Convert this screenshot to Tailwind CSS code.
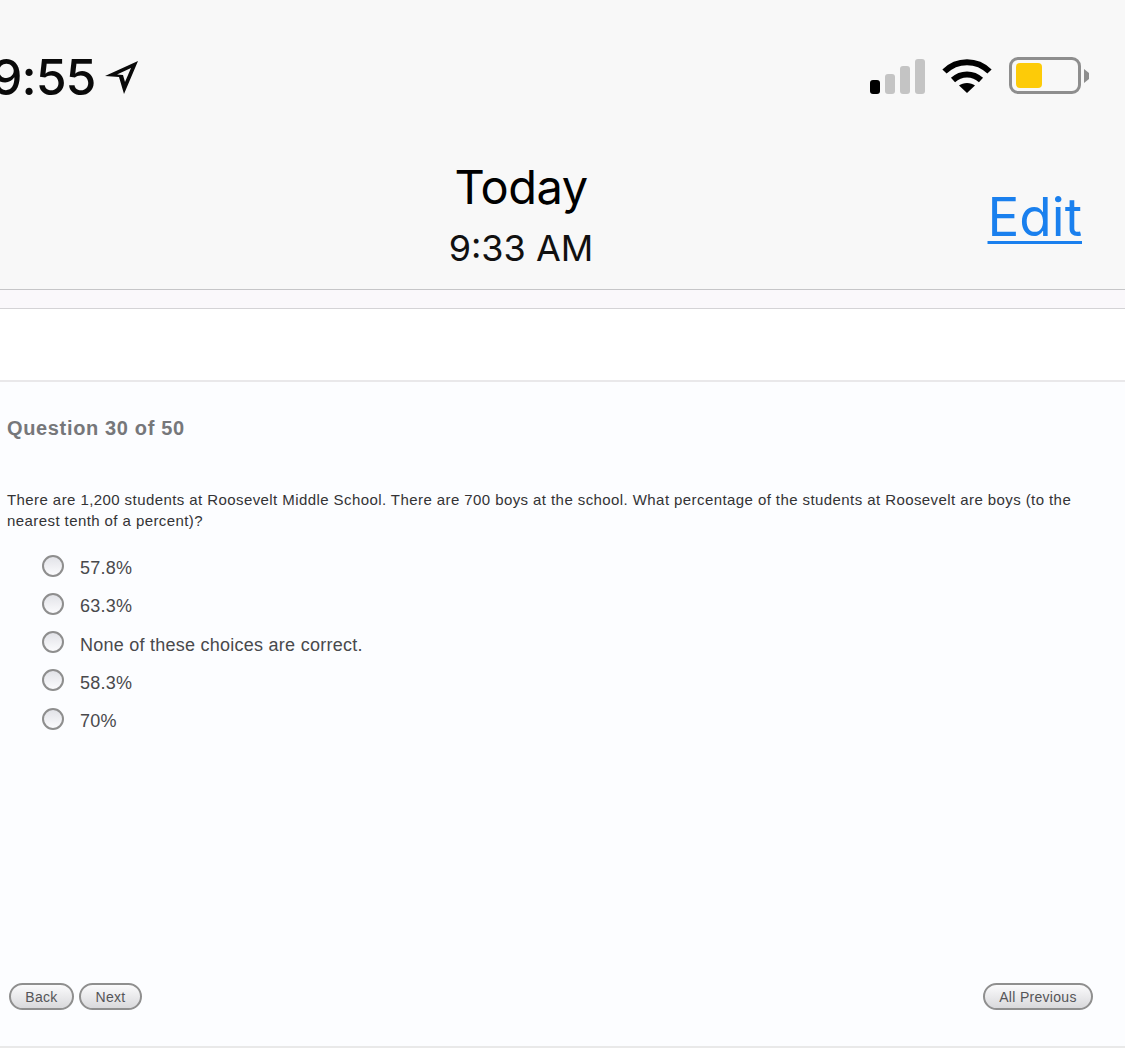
<!DOCTYPE html>
<html>
<head>
    <title>Question 30 of 50</title>
    <script src="https://cdn.jsdelivr.net/npm/@tailwindcss/browser@4"></script>
</head>
<body class="bg-white overflow-hidden font-['Liberation_Sans',sans-serif]">
    <div class="w-[1125px] h-[1062px] flex flex-col overflow-hidden">
        <!-- Status bar + nav -->
        <header class="h-[290px] shrink-0 bg-[#f8f8f8] border-b border-[#c6c6c8] font-['Inter',sans-serif]">
            <div class="h-[147px] flex items-start justify-between">
                <div class="flex items-center pt-[48px] -ml-[9px]">
                    <span class="text-[50px] leading-[58px] font-medium text-[#0a0a0a] tracking-[-1px]">9:55</span>
                    <svg class="ml-[9px]" width="36" height="36" viewBox="0 0 36 36">
                        <path d="M34 2 L1 17 L15 18 L20 35 Z M27 9 L13 15.5 L19 16 L21 23 Z" fill="#0a0a0a" fill-rule="evenodd"/>
                    </svg>
                </div>
                <div class="flex items-center pt-[57px] pr-[36px]">
                    <div class="flex items-end gap-[5px] h-[36px]">
                        <span class="w-[10px] h-[14px] rounded-[3px] bg-black"></span>
                        <span class="w-[10px] h-[20px] rounded-[3px] bg-[#c4c4c4]"></span>
                        <span class="w-[10px] h-[28px] rounded-[3px] bg-[#c4c4c4]"></span>
                        <span class="w-[10px] h-[35px] rounded-[3px] bg-[#c4c4c4]"></span>
                    </div>
                    <svg class="ml-[17px]" width="50" height="36" viewBox="0 0 50 36" fill="none" stroke="#000" stroke-width="6">
                        <path d="M2.5 13.5 C15 1 35 1 47.5 13.5"/>
                        <path d="M11 22 C19 14.5 31 14.5 39 22"/>
                        <path d="M25 35 L17 27.5 C21 24 29 24 33 27.5 Z" fill="#000" stroke="none"/>
                    </svg>
                    <div class="ml-[17px] w-[72px] h-[37px] rounded-[9px] border-[3px] border-[#8e8e8e] px-[4px] py-[3px]">
                        <div class="w-[26px] h-full rounded-[4px] bg-[#fdcb08]"></div>
                    </div>
                    <svg class="ml-[3px]" width="5" height="14" viewBox="0 0 5 14"><path d="M0 0 L5 4 L5 10 L0 14 Z" fill="#8e8e8e"/></svg>
                </div>
            </div>
            <div class="relative h-[142px] text-center">
                <div class="pr-[83px]">
                    <div class="text-[47px] leading-[56px] pt-[12px] text-black tracking-[-0.5px]">Today</div>
                    <div class="text-[36px] leading-[42px] mt-[12px] text-[#111]">9:33 AM</div>
                </div>
                <a class="absolute right-[43px] top-[38px] text-[53px] leading-[64px] text-[#1a80ee] underline decoration-[3px] underline-offset-[5px]">Edit</a>
            </div>
        </header>

        <div class="h-[19px] shrink-0 bg-[#faf8fb] border-b border-[#d4d3d6]"></div>
        <div class="h-[73px] shrink-0 bg-white border-b-2 border-[#e9e8ea]"></div>

        <!-- Question -->
        <main class="flex-1 flex flex-col bg-[#fcfdff] border-b-2 border-[#e9e9e9] px-[7px]">
            <h2 class="mt-[34px] text-[20px] leading-[24px] font-bold text-[#76777a] tracking-[0.65px]">Question 30 of 50</h2>
            <p class="mt-[49px] w-[1090px] text-[15px] leading-[21px] tracking-[0.42px] text-[#333335]">There are 1,200 students at Roosevelt Middle School. There are 700 boys at the school. What percentage of the students at Roosevelt are boys (to the nearest tenth of a percent)?</p>

            <div class="mt-[26px] ml-[35px] flex flex-col gap-[16.25px] text-[18px] leading-[22px] tracking-[0.25px] text-[#49494c]">
                <label class="flex items-center gap-[16px]"><span class="w-[22px] h-[22px] rounded-full border-2 border-[#8e8e8e] bg-gradient-to-b from-[#e2e3e8] to-[#fbfbfd] -mt-[5px]"></span>57.8%</label>
                <label class="flex items-center gap-[16px]"><span class="w-[22px] h-[22px] rounded-full border-2 border-[#8e8e8e] bg-gradient-to-b from-[#e2e3e8] to-[#fbfbfd] -mt-[5px]"></span>63.3%</label>
                <label class="flex items-center gap-[16px]"><span class="w-[22px] h-[22px] rounded-full border-2 border-[#8e8e8e] bg-gradient-to-b from-[#e2e3e8] to-[#fbfbfd] -mt-[5px]"></span>None of these choices are correct.</label>
                <label class="flex items-center gap-[16px]"><span class="w-[22px] h-[22px] rounded-full border-2 border-[#8e8e8e] bg-gradient-to-b from-[#e2e3e8] to-[#fbfbfd] -mt-[5px]"></span>58.3%</label>
                <label class="flex items-center gap-[16px]"><span class="w-[22px] h-[22px] rounded-full border-2 border-[#8e8e8e] bg-gradient-to-b from-[#e2e3e8] to-[#fbfbfd] -mt-[5px]"></span>70%</label>
            </div>

            <div class="mt-auto mb-[36px] ml-[2px] mr-[25px] flex items-center justify-between text-[14px] tracking-[0.3px] text-[#555558]">
                <div class="flex gap-[5px]">
                    <button class="w-[65px] h-[27px] pt-[1px] rounded-full border-2 border-[#8f8f8f] bg-gradient-to-b from-[#fbfbfc] to-[#d9d9dc]">Back</button>
                    <button class="w-[63px] h-[27px] pt-[1px] rounded-full border-2 border-[#8f8f8f] bg-gradient-to-b from-[#fbfbfc] to-[#d9d9dc]">Next</button>
                </div>
                <button class="w-[110px] h-[27px] pt-[1px] rounded-full border-2 border-[#8f8f8f] bg-gradient-to-b from-[#fbfbfc] to-[#d9d9dc]">All Previous</button>
            </div>
        </main>

        <div class="h-[14px] shrink-0 bg-white"></div>
    </div>
</body>
</html>
